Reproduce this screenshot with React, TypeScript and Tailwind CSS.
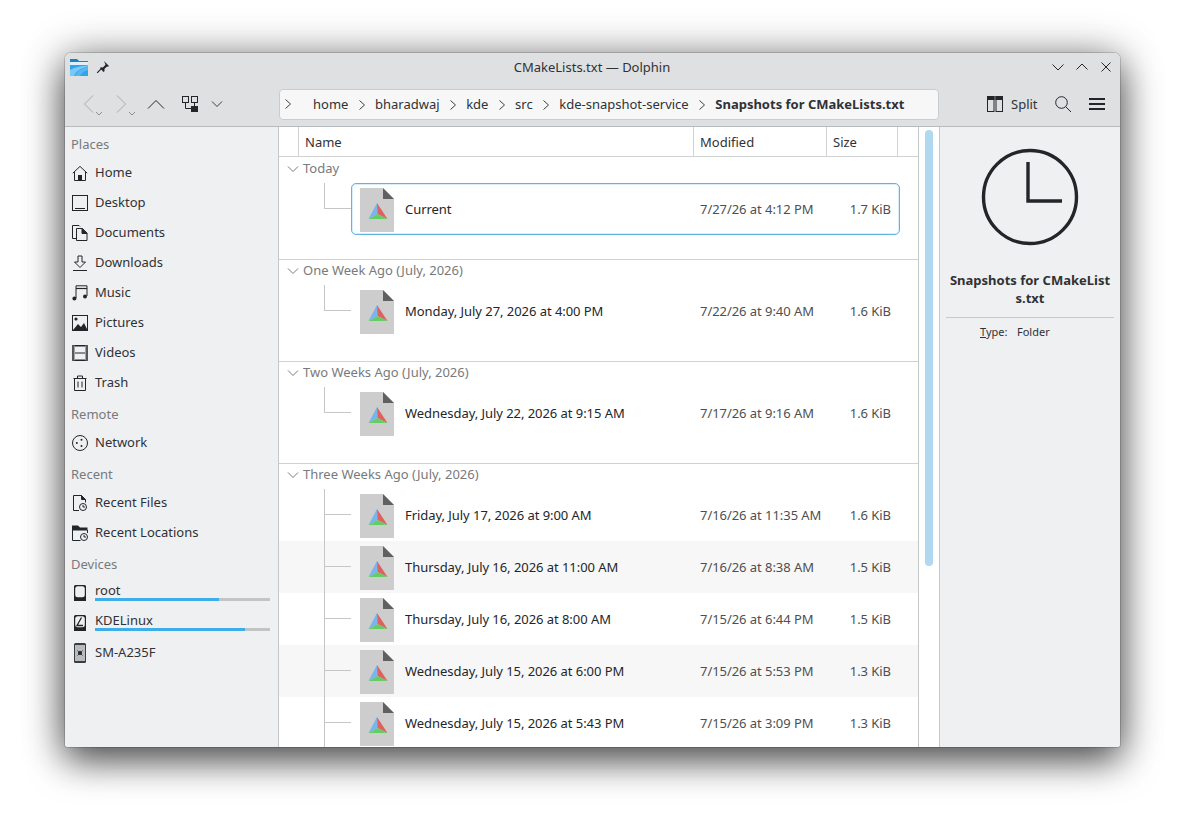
const ink = '#232629';

function I({ children, w = 16, h = 16 }: { children: React.ReactNode; w?: number; h?: number }) {
  return (
    <svg width={w} height={h} viewBox={`0 0 ${w} ${h}`} fill="none" stroke={ink} strokeWidth="1" className="shrink-0">
      {children}
    </svg>
  );
}

const placeIcons: Record<string, React.ReactNode> = {
  Home: (
    <I>
      <path d="M0.8 8.2 8 1.4l7.2 6.8M2.5 7v8.5h11V7" />
      <rect x="6" y="10" width="4" height="5.5" fill={ink} stroke="none" />
    </I>
  ),
  Desktop: (
    <I>
      <rect x="0.5" y="0.5" width="15" height="15" />
      <path d="M3 13.5h10" />
    </I>
  ),
  Documents: (
    <I>
      <path d="M4.5 13.5H0.5V0.5H7l1 1" />
      <path d="M4.5 3.5h6l4.5 4.5v7.5H4.5z" />
      <path d="M10 3.5 15 8.5H10z" fill={ink} />
    </I>
  ),
  Downloads: (
    <I>
      <path d="M6 1h4v6h3.5L8 12.5 2.5 7H6z" />
      <path d="M1 15.5h14" />
    </I>
  ),
  Music: (
    <I>
      <path d="M4 13V0.8h11V11" />
      <path d="M4 3.5h11" strokeWidth="1.2" />
      <circle cx="2.4" cy="13.4" r="2" fill={ink} stroke="none" />
      <circle cx="13" cy="11.4" r="2" fill={ink} stroke="none" />
    </I>
  ),
  Pictures: (
    <I>
      <rect x="0.5" y="0.5" width="15" height="15" />
      <circle cx="4" cy="4" r="1.6" fill={ink} stroke="none" />
      <path d="M1 15l5-6 3 3 3-4 3.5 7z" fill={ink} stroke="none" />
    </I>
  ),
  Videos: (
    <I>
      <rect x="0.5" y="0.5" width="15" height="15" />
      <rect x="0" y="0" width="2.5" height="16" fill="#55585a" stroke="none" />
      <rect x="13.5" y="0" width="2.5" height="16" fill="#55585a" stroke="none" />
      <path d="M3 1h10M3 8h10M3 15h10" />
    </I>
  ),
  Trash: (
    <I>
      <path d="M1.5 3.5h13M5.5 3.5V1h5v2.5M2.5 3.5v12h11v-12M6 6.5v6M10 6.5v6" />
    </I>
  ),
  Network: (
    <I>
      <circle cx="8" cy="8" r="7.5" />
      <circle cx="4.8" cy="8" r="1" fill={ink} stroke="none" />
      <circle cx="9.5" cy="4.8" r="1" fill={ink} stroke="none" />
      <circle cx="9.5" cy="11" r="1" fill={ink} stroke="none" />
    </I>
  ),
  'Recent Files': (
    <I>
      <path d="M7 15.5H1.5V0.5h8l4 4v3" />
      <path d="M9.5 0.5l4 4h-4z" fill={ink} />
      <circle cx="11" cy="12" r="3.5" fill="#eff0f2" />
      <path d="M11 10v2h2" />
    </I>
  ),
  'Recent Locations': (
    <I>
      <path d="M0.5 2.5V15.5h8" />
      <path d="M0 0.5h6l2 2h7.5v3H0z" fill={ink} stroke="none" />
      <path d="M15.5 5v3" />
      <circle cx="12" cy="12" r="3.5" fill="#eff0f2" />
      <path d="M12 10v2h2" />
    </I>
  ),
  root: (
    <I>
      <path d="M3.5 0h9A1.5 1.5 0 0 1 14 1.5V16H2V1.5A1.5 1.5 0 0 1 3.5 0z" fill={ink} stroke="none" />
      <rect x="3.2" y="1.2" width="9.6" height="11" rx="2.5" fill="#eff0f2" stroke="none" />
    </I>
  ),
  KDELinux: (
    <I>
      <path d="M3.5 0h9A1.5 1.5 0 0 1 14 1.5V16H2V1.5A1.5 1.5 0 0 1 3.5 0z" fill={ink} stroke="none" />
      <rect x="3.2" y="1.2" width="9.6" height="11" rx="2.5" fill="#eff0f2" stroke="none" />
      <path d="M9.5 2.5 5 10.5h6" strokeWidth="1.3" />
    </I>
  ),
  'SM-A235F': (
    <I w={16} h={20}>
      <rect x="2" y="0" width="12" height="20" rx="1.5" fill="#3a3d40" stroke="none" />
      <rect x="3" y="2" width="10" height="16" fill="#b9bcbe" stroke="none" />
      <circle cx="8" cy="10" r="2" fill={ink} stroke="none" />
      <path d="M5.5 7.5l5 5M10.5 7.5l-5 5" strokeWidth="0.8" />
    </I>
  ),
};

function Heading({ children }: { children: React.ReactNode }) {
  return <div className="flex h-[30px] items-center pl-[6px] pt-[4px] text-[#787a7c]">{children}</div>;
}

function Place({ name, bar }: { name: string; bar?: number }) {
  return (
    <div className="flex h-[30px] items-center gap-[7px] pl-[7px] pr-[8px]">
      {placeIcons[name]}
      {bar ? (
        <div className="flex-1 pb-[1px]">
          <div className="-mt-[4px] h-[18px] leading-[20px]">{name}</div>
          <div className="h-[3px] bg-[#c3c4c5]">
            <div className="h-full bg-[#3daee9]" style={{ width: `${bar}%` }} />
          </div>
        </div>
      ) : (
        <span>{name}</span>
      )}
    </div>
  );
}

function Sidebar() {
  return (
    <aside className="w-[214px] shrink-0 border-r border-[#c6c7c8] bg-[#eff0f2] pt-[1px] text-[#2f3235]">
      <Heading>Places</Heading>
      {['Home', 'Desktop', 'Documents', 'Downloads', 'Music', 'Pictures', 'Videos', 'Trash'].map((n) => (
        <Place key={n} name={n} />
      ))}
      <Heading>Remote</Heading>
      <Place name="Network" />
      <Heading>Recent</Heading>
      <Place name="Recent Files" />
      <Place name="Recent Locations" />
      <Heading>Devices</Heading>
      <Place name="root" bar={70.8} />
      <Place name="KDELinux" bar={85.7} />
      <Place name="SM-A235F" />
    </aside>
  );
}

function CmakeFile() {
  return (
    <svg width="34" height="44" viewBox="0 0 34 44" className="mt-[1px] shrink-0">
      <path d="M0 0H23L34 11V44H0z" fill="#cdcdcd" />
      <path d="M23 0L34 11H23z" fill="#606062" />
      <path d="M17 15 8.5 31 17.5 26z" fill="#78b4ee" />
      <path d="M17 15 27.5 31 17.5 26z" fill="#e0605f" />
      <path d="M8.5 31H27.5L17.5 26z" fill="#66cc66" />
    </svg>
  );
}

type Item = { name: string; date: string; size: string };

function Row({ item, selected, alt, through }: { item: Item; selected?: boolean; alt?: boolean; through?: boolean }) {
  return (
    <div className={`relative h-[52px] ${alt ? 'bg-[#f7f7f7]' : 'bg-white'}`}>
      <div className={`absolute left-[45px] top-0 w-px bg-[#c6c6c6] ${through ? 'h-[52px]' : 'h-[26px]'}`} />
      <div className="absolute left-[45px] top-[25px] h-px w-[27px] bg-[#c6c6c6]" />
      <div
        className={`ml-[72px] mr-[18px] flex h-full items-center rounded-[5px] border pl-[8px] tracking-[-0.05px] ${
          selected ? 'border-[#5fb4e2] shadow-[inset_0_0_0_1px_rgba(61,174,233,0.2)]' : 'border-transparent'
        }`}
      >
        <CmakeFile />
        <div className="ml-[11px] w-[295px] shrink-0 pt-[2px]">{item.name}</div>
        <div className="w-[125px] shrink-0 pt-[2px] text-[#4d4f51]">{item.date}</div>
        <div className="flex-1 pr-[8px] pt-[2px] text-right text-[#4d4f51]">{item.size}</div>
      </div>
    </div>
  );
}

function Group({ title, first, children }: { title: string; first?: boolean; children: React.ReactNode }) {
  return (
    <section className={first ? '' : 'border-t border-[#d1d2d3]'}>
      <div
        className={`flex items-center gap-[4px] pl-[8px] text-[#787a7c] ${
          first ? 'h-[26px] pb-[2px]' : 'h-[25px] pb-[4px]'
        }`}
      >
        <svg width="12" height="12" viewBox="0 0 12 12" fill="none" stroke="#787a7c" strokeWidth="1">
          <path d="M1 3.5 6 8.5l5-5" />
        </svg>
        <span>{title}</span>
      </div>
      {children}
    </section>
  );
}

function FileList() {
  const older: Item[] = [
    { name: 'Friday, July 17, 2026 at 9:00 AM', date: '7/16/26 at 11:35 AM', size: '1.6 KiB' },
    { name: 'Thursday, July 16, 2026 at 11:00 AM', date: '7/16/26 at 8:38 AM', size: '1.5 KiB' },
    { name: 'Thursday, July 16, 2026 at 8:00 AM', date: '7/15/26 at 6:44 PM', size: '1.5 KiB' },
    { name: 'Wednesday, July 15, 2026 at 6:00 PM', date: '7/15/26 at 5:53 PM', size: '1.3 KiB' },
    { name: 'Wednesday, July 15, 2026 at 5:43 PM', date: '7/15/26 at 3:09 PM', size: '1.3 KiB' },
  ];
  return (
    <main className="w-[640px] shrink-0 overflow-hidden border-r border-[#c6c7c8] bg-white text-[#232629]">
      <div className="flex h-[30px] border-b border-[#d1d2d3] text-[#2f3235]">
        <div className="w-[20px] border-r border-[#d1d2d3]" />
        <div className="flex w-[395px] items-center border-r border-[#d1d2d3] pl-[6px] pt-[3px]">Name</div>
        <div className="flex w-[133px] items-center border-r border-[#d1d2d3] pl-[6px] pt-[3px]">Modified</div>
        <div className="flex w-[71px] items-center border-r border-[#d1d2d3] pl-[6px] pt-[3px]">Size</div>
      </div>
      <Group title="Today" first>
        <div className="h-[76px]">
          <Row item={{ name: 'Current', date: '7/27/26 at 4:12 PM', size: '1.7 KiB' }} selected />
        </div>
      </Group>
      <Group title="One Week Ago (July, 2026)">
        <div className="h-[76px]">
          <Row item={{ name: 'Monday, July 27, 2026 at 4:00 PM', date: '7/22/26 at 9:40 AM', size: '1.6 KiB' }} />
        </div>
      </Group>
      <Group title="Two Weeks Ago (July, 2026)">
        <div className="h-[76px]">
          <Row item={{ name: 'Wednesday, July 22, 2026 at 9:15 AM', date: '7/17/26 at 9:16 AM', size: '1.6 KiB' }} />
        </div>
      </Group>
      <Group title="Three Weeks Ago (July, 2026)">
        {older.map((item, i) => (
          <Row key={item.name} item={item} alt={i % 2 === 1} through />
        ))}
      </Group>
    </main>
  );
}

function InfoPanel() {
  return (
    <aside className="flex-1 bg-[#eff0f2] text-[#2f3235]">
      <div className="flex justify-center pt-[21px]">
        <svg width="98" height="98" viewBox="0 0 98 98" fill="none" stroke={ink}>
          <circle cx="49" cy="49" r="46.5" strokeWidth="3.4" />
          <path d="M47 14v39h34" strokeWidth="3.4" />
        </svg>
      </div>
      <div className="mt-[25px] break-all px-[6px] text-center font-bold leading-[18px]">Snapshots for CMakeList s.txt</div>
      <div className="mx-[6px] mt-[10px] border-t border-[#c8c9ca]" />
      <div className="mt-[6px] flex pl-[40px] text-[11px] leading-[16px]">
        <span className="w-[37px]">
          <span className="underline">T</span>ype:
        </span>
        <span>Folder</span>
      </div>
    </aside>
  );
}

function Chevron({ d, w = 12, h = 12, color = ink }: { d: string; w?: number; h?: number; color?: string }) {
  return (
    <svg width={w} height={h} viewBox={`0 0 ${w} ${h}`} fill="none" stroke={color} strokeWidth="1" className="shrink-0">
      <path d={d} />
    </svg>
  );
}

function Crumb({ label }: { label: string }) {
  return (
    <>
      <span>{label}</span>
      <svg width="8" height="12" viewBox="0 0 8 12" fill="none" stroke="#3a3d40" className="mx-[9.3px] shrink-0">
        <path d="M1.5 1.5 6.5 6l-5 4.5" />
      </svg>
    </>
  );
}

function Caret({ className }: { className: string }) {
  return (
    <svg width="8" height="5" viewBox="0 0 8 5" fill="none" stroke="#8d8f91" className={className}>
      <path d="M1 1l3 3 3-3" />
    </svg>
  );
}

function Header() {
  return (
    <header className="h-[74px] shrink-0 border-b border-[#b9babb] bg-[#dfe0e2] text-[#2f3235]">
      <div className="flex h-[28px] items-center pl-[5px] pr-[8px]">
        <svg width="18" height="17" viewBox="0 0 18 17" className="shrink-0">
          <path d="M0 0h7l2 2h9v15H0z" fill="#1d7fc4" />
          <rect x="0" y="3" width="18" height="3" fill="#dff0fb" />
          <path d="M0 6h18v11H0z" fill="#2ea6ee" />
          <path d="M0 17V11C5 8 12 7 18 6.5v1C11 9 6 12 4 17z" fill="#7cc7f5" />
          <path d="M5 17c2-5 7-8 13-9v3c-4 1-7 3-8 6z" fill="#58b6f2" />
        </svg>
        <svg width="14" height="14" viewBox="0 0 14 14" fill={ink} className="ml-[8px] shrink-0">
          <path d="M8 1l5 5-1 .8-1-.4-2.6 2.6.2 2-1 1L3.9 8.2l1-1 2 .2 2.6-2.6-.4-1z" />
          <path d="M4.8 9.2 1.2 12.8" stroke={ink} strokeWidth="1.2" />
        </svg>
        <div className="flex-1 pl-[22px] pt-[2px] text-center">CMakeLists.txt — Dolphin</div>
        <div className="flex items-center gap-[12px]">
          <Chevron d="M0.5 3.5 6 9l5.5-5.5" />
          <Chevron d="M0.5 8.5 6 3l5.5 5.5" />
          <Chevron d="M1.5 1.5l9 9M10.5 1.5l-9 9" />
        </div>
      </div>
      <div className="flex h-[45px] items-center pt-[1px]">
        <div className="flex w-[214px] shrink-0 items-center pl-[17px]">
          <div className="relative h-[18px] w-[12px]">
            <Chevron w={12} h={18} d="M11 0.5 2.5 9l8.5 8.5" color="#a9abad" />
            <Caret className="absolute left-[13px] top-[16px]" />
          </div>
          <div className="relative ml-[22px] h-[18px] w-[12px]">
            <Chevron w={12} h={18} d="M1 0.5 9.5 9 1 17.5" color="#a9abad" />
            <Caret className="absolute left-[12px] top-[16px]" />
          </div>
          <div className="ml-[19px]">
            <Chevron w={18} h={10} d="M1 9.5 9 1.5l8 8" />
          </div>
          <svg width="16" height="16" viewBox="0 0 16 16" fill="none" stroke={ink} className="ml-[17px] shrink-0">
            <rect x="0.5" y="0.5" width="6" height="6" />
            <rect x="9.5" y="0.5" width="6" height="6" />
            <path d="M3.5 7v5.5H9M12.5 7v3" />
            <rect x="9" y="10" width="7" height="6" fill={ink} stroke="none" />
          </svg>
          <div className="ml-[13px]">
            <Chevron d="M1 3.5 6 8.5l5-5" color="#3a3d40" />
          </div>
        </div>
        <div className="flex h-[31px] w-[660px] shrink-0 items-center rounded-[4px] border border-[#cbcccd] bg-[#f7f7f8] pl-[4px]">
          <svg width="8" height="12" viewBox="0 0 8 12" fill="none" stroke="#3a3d40" className="mr-[21px] shrink-0">
            <path d="M1.5 1.5 6.5 6l-5 4.5" />
          </svg>
          <div className="flex items-center pt-[1px]">
            <Crumb label="home" />
            <Crumb label="bharadwaj" />
            <Crumb label="kde" />
            <Crumb label="src" />
            <Crumb label="kde-snapshot-service" />
            <span className="font-bold">Snapshots for CMakeLists.txt</span>
          </div>
        </div>
        <div className="flex flex-1 items-center pl-[48px] pr-[15px]">
          <svg width="16" height="16" viewBox="0 0 16 16" fill="none" stroke={ink} className="shrink-0">
            <rect x="0.5" y="0.5" width="6.5" height="15" />
            <rect x="9" y="0.5" width="6.5" height="15" />
            <rect x="0.5" y="0.5" width="6.5" height="3" fill={ink} />
            <rect x="9" y="0.5" width="6.5" height="3" fill={ink} />
          </svg>
          <span className="ml-[8px] pt-[2px]">Split</span>
          <svg width="17" height="17" viewBox="0 0 17 17" fill="none" stroke={ink} className="ml-[17px] shrink-0">
            <circle cx="6.5" cy="6.5" r="5.8" />
            <path d="M10.8 10.8 16 16" />
          </svg>
          <svg width="16" height="14" viewBox="0 0 16 14" fill={ink} className="ml-[17px] shrink-0">
            <rect y="1" width="16" height="2" />
            <rect y="6" width="16" height="2" />
            <rect y="11" width="16" height="2" />
          </svg>
        </div>
      </div>
    </header>
  );
}

export default function App() {
  return (
    <div className="h-[824px] w-[1185px] overflow-hidden bg-white pl-[65px] pt-[53px] font-['Noto_Sans',sans-serif] text-[13px]">
      <div className="flex h-[694px] w-[1055px] flex-col overflow-hidden rounded-t-[6px] rounded-b-[3px] shadow-[0_14px_36px_rgba(0,0,0,0.62),0_0_44px_rgba(0,0,0,0.3),0_0_0_1px_rgba(0,0,0,0.15)]">
        <Header />
        <div className="flex min-h-0 flex-1">
          <Sidebar />
          <FileList />
          <div className="w-[21px] shrink-0 border-r border-[#c6c7c8] bg-white pl-[6px] pt-[3px]">
            <div className="h-[436px] w-[8px] rounded-full bg-[#b0d8f1]" />
          </div>
          <InfoPanel />
        </div>
      </div>
    </div>
  );
}
